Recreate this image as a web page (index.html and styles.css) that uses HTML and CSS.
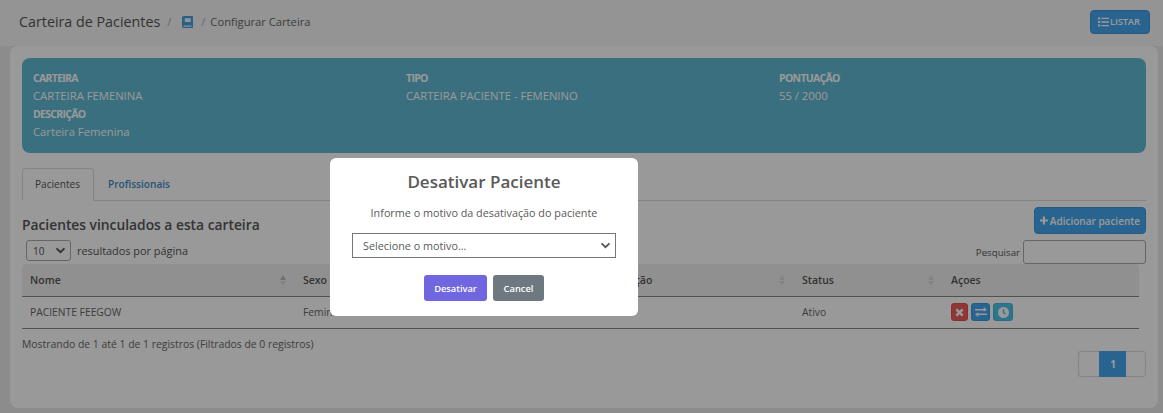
FILE: index.html
```html
<!DOCTYPE html>
<html lang="pt-BR">
<head>
<meta charset="utf-8">
<title>Carteira de Pacientes</title>
<link rel="stylesheet" href="styles.css">
</head>
<body>
<header class="topbar">
  <div class="crumbs">
    <h1 class="page-title">Carteira de Pacientes</h1>
    <span class="sep">/</span>
    <svg class="book" viewBox="0 0 12 13" width="11" height="12" aria-hidden="true"><path fill-rule="evenodd" d="M2 0h9a1 1 0 0 1 1 1v11a1 1 0 0 1-1 1H2a2 2 0 0 1-2-2V2a2 2 0 0 1 2-2zm1 2.500v4h6.500v-4zM1.600 10.200v.8c0 .4.3.7.7.7h8.100v-1.500z"/></svg>
    <span class="sep">/</span>
    <span class="crumb">Configurar Carteira</span>
  </div>
  <a class="btn btn-list">
    <svg viewBox="0 0 12 10" width="11" height="10" aria-hidden="true"><path d="M0 0h2.400v2.200H0zM0 3.900h2.400v2.200H0zM0 7.800h2.400V10H0zM3.500.4H12v1.400H3.500zM3.500 4.300H12v1.400H3.500zM3.500 8.200H12v1.400H3.500z"/></svg>
    <span>LISTAR</span>
  </a>
</header>

<main class="panel">
  <section class="info">
    <div class="info-grid">
      <div><b>CARTEIRA</b><p>CARTEIRA FEMENINA</p></div>
      <div><b>TIPO</b><p>CARTEIRA PACIENTE - FEMENINO</p></div>
      <div><b>PONTUAÇÃO</b><p>55 / 2000</p></div>
    </div>
    <div><b>DESCRIÇÃO</b><p>Carteira Femenina</p></div>
  </section>

  <nav class="tabs">
    <a class="tab active">Pacientes</a>
    <a class="tab">Profissionais</a>
  </nav>

  <div class="heading-row">
    <h2>Pacientes vinculados a esta carteira</h2>
    <a class="btn btn-add">
      <svg viewBox="0 0 10 10" width="9" height="9" aria-hidden="true"><path d="M3.600 0h2.800v3.600H10v2.800H6.400V10H3.600V6.400H0V3.600h3.600z"/></svg>
      <span>Adicionar paciente</span>
    </a>
  </div>

  <div class="controls">
    <div class="length">
      <span class="mini-select">10
        <svg viewBox="0 0 12 8" width="11" height="7" aria-hidden="true"><path d="M1.500 1.500 6 6l4.500-4.500" fill="none" stroke="currentColor" stroke-width="2.200"/></svg>
      </span>
      <span>resultados por página</span>
    </div>
    <label class="search">Pesquisar <span class="search-box"></span></label>
  </div>

  <table class="grid">
    <colgroup><col class="c1"><col class="c2"><col class="c3"><col class="c4"><col class="c5"></colgroup>
    <thead>
      <tr>
        <th>Nome<span class="sort first"></span></th>
        <th>Sexo<span class="sort"></span></th>
        <th>Data de adição<span class="sort"></span></th>
        <th>Status<span class="sort"></span></th>
        <th>Açoes</th>
      </tr>
    </thead>
    <tbody>
      <tr>
        <td>PACIENTE FEEGOW</td>
        <td>Feminino</td>
        <td></td>
        <td>Ativo</td>
        <td>
          <div class="actions">
            <a class="act red"><svg viewBox="0 0 10 10" width="9" height="9" aria-hidden="true"><path d="M1.500 1.500l7 7M8.500 1.500l-7 7" stroke="currentColor" stroke-width="2.800" fill="none"/></svg></a>
            <a class="act blue"><svg viewBox="0 0 13 11" width="12" height="10" aria-hidden="true"><path d="M0 2.300h9.500V0L13 3.200 9.500 5V3.900H0zM13 7.100H3.500V6L0 8l3.500 3V8.700H13z"/></svg></a>
            <a class="act cyan"><svg viewBox="0 0 12 12" width="11" height="11" aria-hidden="true"><path fill-rule="evenodd" d="M6 0a6 6 0 1 1 0 12A6 6 0 0 1 6 0zM5.200 2.500v4.100l2.900 1.700.8-1.300-2.100-1.200V2.500z"/></svg></a>
          </div>
        </td>
      </tr>
    </tbody>
  </table>

  <p class="count">Mostrando de 1 até 1 de 1 registros (Filtrados de 0 registros)</p>

  <div class="pager">
    <a class="page"></a><a class="page current">1</a><a class="page"></a>
  </div>
</main>

<div class="backdrop"></div>

<div class="modal" role="dialog">
  <h3>Desativar Paciente</h3>
  <p>Informe o motivo da desativação do paciente</p>
  <div class="fake-select">
    <span>Selecione o motivo...</span>
    <svg viewBox="0 0 12 8" width="11" height="7" aria-hidden="true"><path d="M1.500 1.500 6 6l4.500-4.500" fill="none" stroke="currentColor" stroke-width="2.200"/></svg>
  </div>
  <div class="modal-actions">
    <a class="mbtn confirm">Desativar</a>
    <a class="mbtn cancel">Cancel</a>
  </div>
</div>
</body>
</html>
```
FILE: styles.css
```css
* { box-sizing: border-box; }
html, body { height: 100%; }
body {
  margin: 0;
  height: 413px;
  overflow: hidden;
  background: #e9e9e9;
  color: #555;
  font-family: "Open Sans", sans-serif;
  font-size: 11px;
}
p, h1, h2, h3 { margin: 0; }

.topbar {
  height: 46px;
  display: flex;
  align-items: center;
  justify-content: space-between;
  padding: 0 13px 3px 19px;
  background: #f7f7f7;
}
.crumbs { display: flex; align-items: center; }
.page-title { font-size: 14.300px; font-weight: 400; color: #555; }
.sep { color: #aaa; margin: 0 6px 0 7px; font-size: 11px; }
.book { fill: #44a0e0; margin: 0 1px 0 5px; }
.crumb { font-size: 11.200px; color: #666; margin-left: -1px; }

.btn {
  display: inline-flex;
  align-items: center;
  color: #fff;
  background: #44a7ee;
  border: 1px solid #3a97dc;
  border-radius: 4px;
}
.btn svg { fill: currentColor; }
.btn-list { width: 60px; height: 24px; padding: 0 7px; gap: 1px; font-size: 9.500px; font-weight: 600; letter-spacing: -.2px; }
.btn-add { height: 27px; padding: 0 5px; gap: 2px; font-size: 10px; font-weight: 600; width: 112px; white-space: nowrap; }

.panel {
  width: 1148px;
  height: 362px;
  margin-left: 10px;
  padding: 12px;
  background: #fff;
  border-radius: 8px;
}

.info {
  height: 95px;
  padding: 11px 11px;
  background: #5fbad3;
  border-radius: 8px;
  color: #fff;
  line-height: 18px;
  font-size: 11.250px;
}
.info b { display: block; font-weight: 700; font-size: 10.500px; letter-spacing: -.7px; }
.info p { font-weight: 400; }
.info-grid { display: grid; grid-template-columns: 373px 373px 1fr; }

.tabs {
  display: flex;
  height: 33px;
  margin-top: 15px;
  border-bottom: 1px solid #ddd;
}
.tab {
  height: 33px;
  padding: 9px 14px 0 14px;
  font-size: 10.100px;
  color: #428bca;
  font-weight: 600;
}
.tab.active {
  color: #555;
  font-weight: 400;
  background: #fff;
  border: 1px solid #ddd;
  border-bottom-color: #fff;
  border-radius: 4px 4px 0 0;
  padding: 8px 13px 0 12px;
}

.heading-row {
  display: flex;
  justify-content: space-between;
  align-items: flex-start;
  margin-top: 6px;
}
.heading-row h2 { font-size: 13.800px; font-weight: 600; margin-top: 8px; color: #555; }

.controls {
  display: flex;
  justify-content: space-between;
  align-items: flex-start;
  height: 24px;
  margin-top: 6px;
  font-size: 9.500px;
}
.length { display: flex; align-items: center; gap: 6px; padding-left: 4px; height: 21px; font-size: 10.900px; }
.mini-select {
  display: flex;
  align-items: center;
  justify-content: space-between;
  width: 45px;
  height: 21px;
  padding: 0 4px 0 6px;
  border: 1px solid #aaa;
  border-radius: 3px;
  font-size: 10px;
  font-weight: 400;
}
.search { display: flex; align-items: center; gap: 3px; font-size: 9.700px; }
.search-box {
  display: block;
  width: 123px;
  height: 24px;
  border: 1px solid #aaa;
  border-radius: 3px;
}

.grid {
  width: 1117px;
  table-layout: fixed;
  border-collapse: collapse;
  font-size: 10px;
}
.c1 { width: 273px; }
.c2 { width: 274px; }
.c3 { width: 225px; }
.c4 { width: 149px; }
.c5 { width: 196px; }
.grid th {
  position: relative;
  height: 32px;
  padding: 0 8px;
  text-align: left;
  font-weight: 600;
  font-size: 10.500px;
  background: #f1f1f1;
  border-bottom: 1px solid #888;
}
.grid thead th:first-child { border-top-left-radius: 4px; }
.grid thead th:last-child { border-top-right-radius: 4px; }
.grid td {
  height: 32px;
  padding: 0 8px;
  border-bottom: 1px solid #888;
  font-size: 10.300px;
  color: #666;
}
.sort {
  position: absolute;
  right: 9px;
  top: 11px;
  width: 6px;
  height: 11px;
}
.sort::before, .sort::after {
  content: "";
  position: absolute;
  left: 0;
  border-left: 3px solid transparent;
  border-right: 3px solid transparent;
}
.sort::before { top: 0; border-bottom: 5px solid #ddd; }
.sort::after { bottom: 0; border-top: 5px solid #ddd; }
.sort.first::before { border-bottom-color: #bbb; }

.actions { display: flex; gap: 3px; }
.act {
  display: flex;
  align-items: center;
  justify-content: center;
  height: 18px;
  border-radius: 3px;
  color: #fff;
}
.act svg { fill: currentColor; }
.red { width: 17px; background: #ee5a5a; border: 1px solid #e24f4f; }
.blue { width: 19px; background: #44a7ee; border: 1px solid #3a97dc; }
.cyan { width: 20px; background: #4cc3e6; border: 1px solid #44b6d8; }

.count { height: 14px; margin-top: 8px; line-height: 14px; font-size: 10.400px; color: #666; }

.pager {
  display: flex;
  justify-content: flex-end;
}
.page {
  display: flex;
  align-items: center;
  justify-content: center;
  width: 20px;
  height: 26px;
  background: #fff;
  border: 1px solid #ddd;
  border-right: 0;
  font-size: 10px;
  font-weight: 700;
}
.page:first-child { border-radius: 3px 0 0 3px; width: 21px; }
.page:last-child { border-right: 1px solid #ddd; border-radius: 0 3px 3px 0; width: 20px; border-left: 0; }
.page.current { width: 27px; background: #44a7ee; border-color: #44a7ee; color: #fff; }

.backdrop {
  position: fixed;
  inset: 0;
  background: rgba(0, 0, 0, .4);
}

.modal {
  position: fixed;
  left: 330px;
  top: 158px;
  width: 308px;
  height: 158px;
  padding: 13px 22px 0;
  background: #fff;
  border-radius: 6px;
  text-align: center;
  color: #595959;
}
.modal h3 { font-size: 17px; font-weight: 600; line-height: 22px; color: #595959; }
.modal p { margin-top: 12px; font-size: 10.800px; line-height: 15px; }
.fake-select {
  display: flex;
  align-items: center;
  justify-content: space-between;
  height: 25px;
  margin-top: 13px;
  padding: 0 4px 0 10px;
  border: 1px solid #777;
  font-size: 10.800px;
}
.modal-actions { display: flex; justify-content: center; gap: 6px; margin-top: 17px; }
.mbtn {
  display: flex;
  align-items: center;
  justify-content: center;
  height: 26px;
  border-radius: 3px;
  color: #fff;
  font-size: 9.300px;
  font-weight: 600;
}
.confirm { width: 63px; background: #7066e0; }
.cancel { width: 51px; background: #6e7881; }
```
